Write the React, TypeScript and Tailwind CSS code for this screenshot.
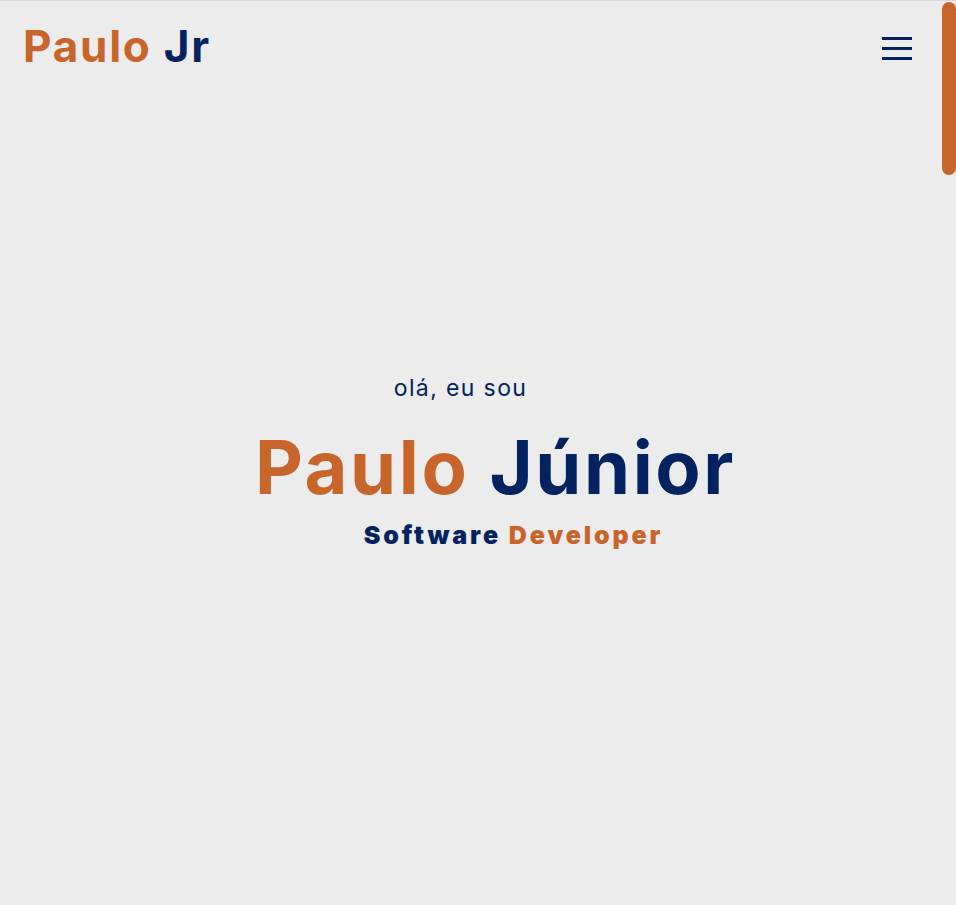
import React from "react";

const font = { fontFamily: "Inter, 'Noto Sans', sans-serif" };

function Menu() {
  return (
    <button type="button" className="flex flex-col gap-[7px] w-[30px] mt-[19px]" aria-label="menu">
      <span className="block h-[3px] w-full bg-[#022360]" />
      <span className="block h-[3px] w-full bg-[#022360]" />
      <span className="block h-[3px] w-full bg-[#022360]" />
    </button>
  );
}

export default function App() {
  return (
    <div style={font} className="h-screen overflow-hidden flex bg-[#ececec] border-t border-[#d8d8d8]">
      <main className="flex-1 min-w-0">
        <header className="flex items-start justify-between pl-[23px] pr-[30px] pt-[17px] h-[90px]">
          <a href="#" className="text-[44px] font-bold leading-[56px] tracking-[0.04em]">
            <span className="text-[#c8652a]">Paulo</span> <span className="text-[#022360]">Jr</span>
          </a>
          <Menu />
        </header>

        <section className="h-[815px] flex flex-col items-center pl-[49px] pt-[281px]">
          <p className="mr-[70px] text-[23px] leading-[32px] text-[#022360] font-normal tracking-[0.06em]">olá, eu sou</p>
          <h1 className="mt-[23px] text-[74px] font-bold leading-[80px] tracking-[0.035em]">
            <span className="text-[#c8652a]">Paulo</span> <span className="text-[#022360]">Júnior</span>
          </h1>
          <h2 className="ml-[36px] mt-[12px] text-[25px] font-black leading-[32px] tracking-[0.115em]">
            <span className="text-[#022360]">Software</span> <span className="text-[#c8652a]">Developer</span>
          </h2>
        </section>
      </main>

      <aside className="w-[14px] shrink-0" aria-hidden="true">
        <div className="mt-[1px] h-[173px] w-full rounded-full bg-[#c8652a]" />
      </aside>
    </div>
  );
}
